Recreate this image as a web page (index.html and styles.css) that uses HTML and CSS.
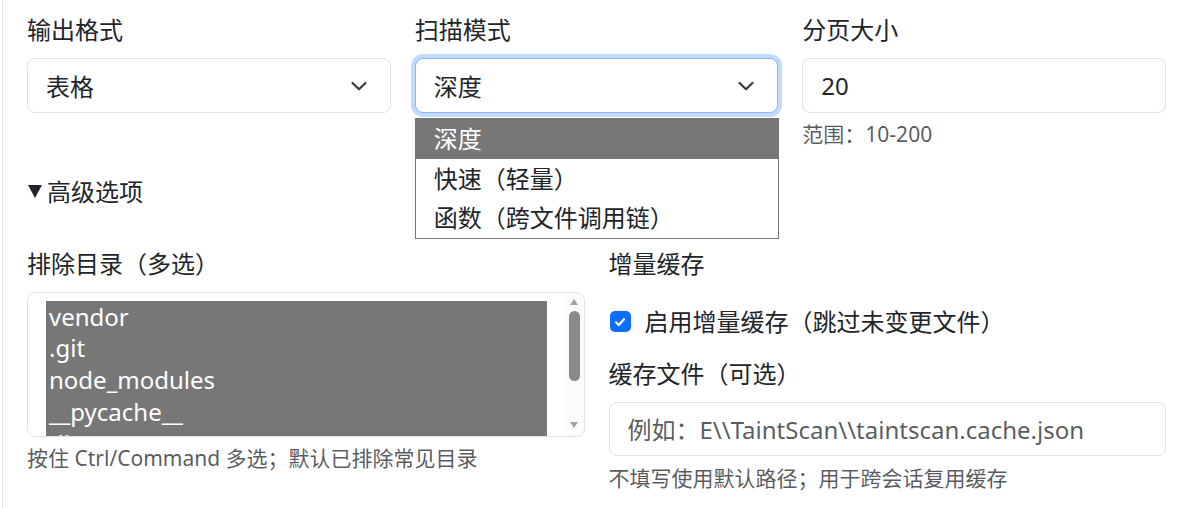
FILE: index.html
```html
<!DOCTYPE html>
<html lang="zh-CN">
<head>
<meta charset="utf-8">
<title>扫描设置</title>
<link rel="stylesheet" href="styles.css">
</head>
<body>
<div class="page">
  <div class="row3">
    <div class="field">
      <div class="label">输出格式</div>
      <div class="select">
        <span>表格</span>
        <svg class="chev" width="18" height="12" viewBox="0 0 18 12"><path d="M2.5 3 9 9.2 15.5 3" fill="none" stroke="#343a40" stroke-width="2.2" stroke-linecap="round" stroke-linejoin="round"/></svg>
      </div>
    </div>
    <div class="field">
      <div class="label">扫描模式</div>
      <div class="select-wrap">
        <div class="select focus">
          <span>深度</span>
          <svg class="chev" width="18" height="12" viewBox="0 0 18 12"><path d="M2.5 3 9 9.2 15.5 3" fill="none" stroke="#343a40" stroke-width="2.2" stroke-linecap="round" stroke-linejoin="round"/></svg>
        </div>
        <div class="dropdown">
          <div class="opt active">深度</div>
          <div class="opt">快速（轻量）</div>
          <div class="opt">函数（跨文件调用链）</div>
        </div>
      </div>
    </div>
    <div class="field">
      <div class="label">分页大小</div>
      <div class="input"><span>20</span></div>
      <div class="hint">范围：10-200</div>
    </div>
  </div>

  <div class="summary"><span class="tri"></span>高级选项</div>

  <div class="row2">
    <div class="field">
      <div class="label">排除目录（多选）</div>
      <div class="multi">
        <div class="list">
          <div class="mopt">vendor</div>
          <div class="mopt">.git</div>
          <div class="mopt">node_modules</div>
          <div class="mopt">__pycache__</div>
          <div class="mopt">dist</div>
        </div>
        <div class="scrollbar">
          <span class="arrow up"></span>
          <span class="thumb"></span>
          <span class="arrow down"></span>
        </div>
      </div>
      <div class="hint">按住 Ctrl/Command 多选；默认已排除常见目录</div>
    </div>
    <div class="field">
      <div class="label">增量缓存</div>
      <div class="check-row">
        <span class="checkbox"><svg width="14" height="14" viewBox="0 0 14 14"><path d="M3 7.2 5.8 10 11 4.2" fill="none" stroke="#fff" stroke-width="2.2" stroke-linecap="round" stroke-linejoin="round"/></svg></span>
        <span>启用增量缓存（跳过未变更文件）</span>
      </div>
      <div class="label">缓存文件（可选）</div>
      <div class="input"><span class="ph">例如：E\\TaintScan\\taintscan.cache.json</span></div>
      <div class="hint hint2">不填写使用默认路径；用于跨会话复用缓存</div>
    </div>
  </div>
</div>
</body>
</html>
```

FILE: styles.css
```css
html, body {
  margin: 0;
  padding: 0;
  background: #fff;
}
body {
  font-family: "Noto Sans", "Noto Sans CJK SC", sans-serif;
  color: #212529;
  font-size: 24px;
}
.page {
  margin-left: 2px;
  border-left: 1px solid #e2e3e5;
  min-height: 508px;
  box-sizing: border-box;
  padding: 12px 15px 0 24px;
}
.row3 {
  display: grid;
  grid-template-columns: repeat(3, 1fr);
  gap: 24px;
}
.row2 {
  display: grid;
  grid-template-columns: repeat(2, 1fr);
  gap: 24px;
  margin-top: 36px;
}
.label {
  line-height: 36px;
  margin-bottom: 10px;
}
.select, .input {
  height: 55px;
  box-sizing: border-box;
  border: 1px solid #dee2e6;
  border-radius: 8px;
  padding: 0 22px 0 18px;
  display: flex;
  align-items: center;
  justify-content: space-between;
  background: #fff;
}
.select-wrap {
  position: relative;
}
.focus {
  border-color: #86b7fe;
  box-shadow: 0 0 0 4px rgba(13, 110, 253, 0.25);
}
.chev {
  flex: none;
}
.dropdown {
  position: absolute;
  top: 60px;
  left: 0;
  width: 364px;
  box-sizing: border-box;
  border: 1px solid #767676;
  background: #fff;
  z-index: 5;
}
.opt {
  height: 39.5px;
  line-height: 39.5px;
  padding-left: 18px;
}
.opt.active {
  background: #777;
  color: #fff;
}
.hint {
  font-size: 21px;
  line-height: 31.5px;
  margin-top: 6px;
  color: rgba(33, 37, 41, 0.75);
}
.hint2 {
  margin-top: 7px;
}
.summary {
  margin-top: 23px;
  line-height: 36px;
  display: flex;
  align-items: center;
}
.tri {
  width: 0;
  height: 0;
  border-left: 7.5px solid transparent;
  border-right: 7.5px solid transparent;
  border-top: 13px solid #212529;
  margin: 0 5px 0 1px;
}
.multi {
  height: 145px;
  box-sizing: border-box;
  border: 1px solid #dee2e6;
  border-radius: 8px;
  display: flex;
  overflow: hidden;
  margin-top: 1px;
}
.list {
  flex: 1;
  padding: 8px 18px 0 18px;
  overflow: hidden;
}
.mopt {
  height: 31.8px;
  line-height: 31.8px;
  background: #777;
  color: #fff;
  padding-left: 3px;
}
.scrollbar {
  flex: none;
  width: 19px;
  display: flex;
  flex-direction: column;
  align-items: center;
  background: #fbfbfb;
}
.arrow {
  width: 0;
  height: 0;
  border-left: 4px solid transparent;
  border-right: 4px solid transparent;
  margin-top: 6px;
}
.arrow.up {
  border-bottom: 6px solid #a0a0a0;
}
.arrow.down {
  border-top: 6px solid #a0a0a0;
  margin-top: auto;
  margin-bottom: 8px;
}
.thumb {
  width: 11px;
  height: 70px;
  border-radius: 6px;
  background: #8a8a8a;
  margin-top: 6px;
}
.check-row {
  display: flex;
  align-items: center;
  line-height: 36px;
  margin: 22px 0 16px;
  padding-left: 1px;
}
.checkbox {
  width: 21px;
  height: 21px;
  border-radius: 5px;
  background: #0d6efd;
  display: flex;
  align-items: center;
  justify-content: center;
  margin-right: 14px;
  flex: none;
}
.input {
  justify-content: flex-start;
}
.row2 .input {
  height: 54px;
}
.ph {
  color: rgba(33, 37, 41, 0.75);
}
```
